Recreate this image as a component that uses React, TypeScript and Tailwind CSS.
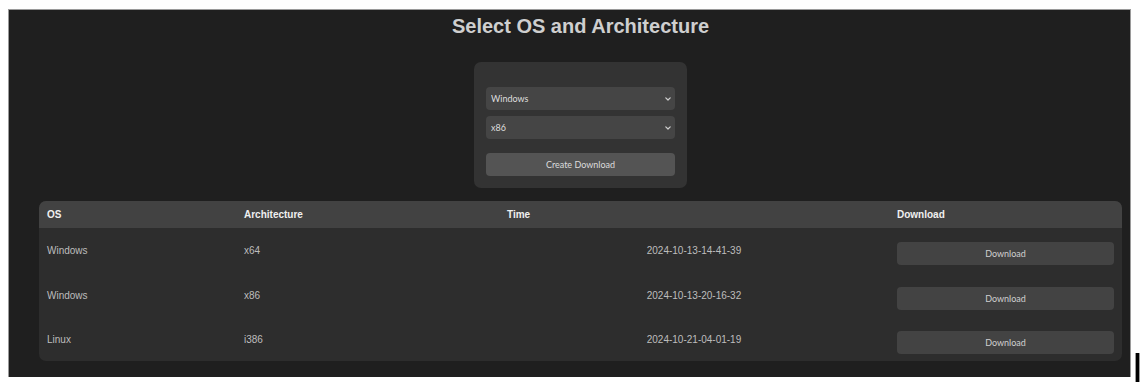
import React from "react";

const rows = [
  { os: "Windows", arch: "x64", time: "2024-10-13-14-41-39", h: "h-[45px]" },
  { os: "Windows", arch: "x86", time: "2024-10-13-20-16-32", h: "h-[44px]" },
  { os: "Linux", arch: "i386", time: "2024-10-21-04-01-19", h: "h-[44px]" },
];

function Chevron() {
  return (
    <svg
      className="pointer-events-none absolute right-[4px] top-1/2 -translate-y-1/2"
      width="6"
      height="4"
      viewBox="0 0 6 4"
      fill="none"
    >
      <path d="M0.8 0.8 L3 3 L5.2 0.8" stroke="#d0d0d0" strokeWidth="1.2" strokeLinecap="round" strokeLinejoin="round" />
    </svg>
  );
}

function Select({ value, options }: { value: string; options: string[] }) {
  return (
    <div className="relative h-[23px] w-full">
      <select
        defaultValue={value}
        className="block h-[23px] w-full appearance-none rounded-[4px] bg-[#454545] py-0 pl-[5px] pr-[14px] text-[9px] leading-[23px] text-[#dedede] outline-none [font-family:Lato,'Noto_Sans',sans-serif]"
      >
        {options.map((o) => (
          <option key={o} value={o}>
            {o}
          </option>
        ))}
      </select>
      <Chevron />
    </div>
  );
}

export default function App() {
  return (
    <div className="flex items-start bg-white pl-[8px] pt-[9px] h-[382px] overflow-hidden [font-family:'Liberation_Sans',Arial,sans-serif]">
      <div className="box-border flex h-[368px] w-[1123px] shrink-0 flex-col items-center border border-b-0 border-[#9a9a9a] bg-[#1f1f1f] pl-[30px] pr-[8px] pt-[5px]">
        <h1 className="h-[23px] text-[20px] font-bold leading-[23px] text-[#cfcfcf]">
          Select OS and Architecture
        </h1>
        <div className="mt-[24px] flex w-[213px] flex-col rounded-[7px] bg-[#333333] px-[12px] pb-[12px] pt-[25px]">
          <Select value="Windows" options={["Windows", "Linux"]} />
          <div className="mt-[6px]">
            <Select value="x86" options={["x86", "x64", "i386"]} />
          </div>
          <button className="mt-[14px] h-[23px] w-full rounded-[4px] bg-[#545454] text-[9px] text-[#dcdcdc] [font-family:Lato,'Noto_Sans',sans-serif]">
            Create Download
          </button>
        </div>
        <div className="mt-[13px] w-[1083px] overflow-hidden rounded-[7px] bg-[#2d2d2d]">
          <div className="grid h-[27px] grid-cols-[197px_263px_390px_233px] items-center bg-[#424242] text-[10px] font-bold text-[#f0f0f0]">
            <div className="px-[8px]">OS</div>
            <div className="px-[8px]">Architecture</div>
            <div className="px-[8px]">Time</div>
            <div className="px-[8px]">Download</div>
          </div>
          {rows.map((r, i) => (
            <div
              key={i}
              className={`grid grid-cols-[197px_263px_390px_233px] text-[10px] text-[#bdbdbd] ${r.h}`}
            >
              <div className="flex items-center px-[8px]">{r.os}</div>
              <div className="flex items-center px-[8px]">{r.arch}</div>
              <div className="flex items-center justify-center px-[8px]">{r.time}</div>
              <div className="px-[8px] pt-[14px]">
                <button className="h-[23px] w-full rounded-[4px] bg-[#434343] text-[9px] text-[#d0d0d0] [font-family:Lato,'Noto_Sans',sans-serif]">
                  Download
                </button>
              </div>
            </div>
          ))}
        </div>
      </div>
      <div className="ml-[4px] mt-[344px] h-[40px] w-[5px] shrink-0 border-x border-[#9a9a9a] bg-black" />
    </div>
  );
}
